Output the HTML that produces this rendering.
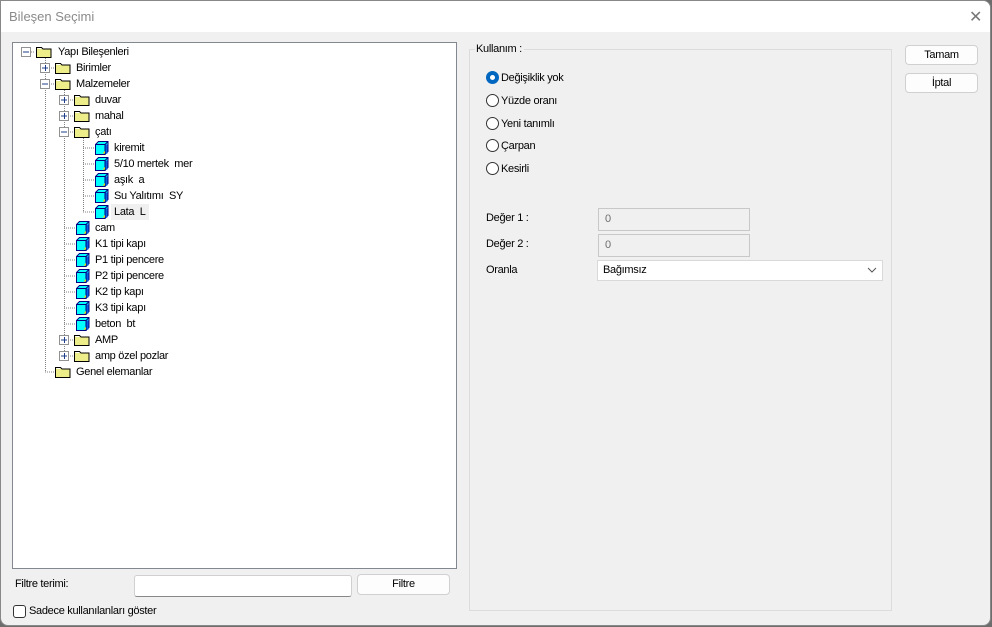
<!DOCTYPE html>
<html><head><meta charset="utf-8"><style>
*{margin:0;padding:0;box-sizing:border-box}
body{width:992px;height:627px;background:#6d6d6d;font-family:"Liberation Sans",sans-serif;font-size:11px;letter-spacing:-0.3px;color:#000;overflow:hidden;position:relative}
.win{position:absolute;left:0;top:0;width:991px;height:626px;background:#f0f0f0;border:1px solid #888;border-radius:0 8px 8px 8px;overflow:hidden}
.title{position:absolute;left:0;top:0;width:100%;height:31px;background:#fff}
.title span{position:absolute;left:8px;top:8px;font-size:13px;letter-spacing:0;color:#8a8a8a}
.x{position:absolute;left:968px;top:6px;font-size:16px;color:#777}
.a{position:absolute;white-space:nowrap}
.tree{position:absolute;left:11px;top:41px;width:445px;height:527px;background:#fff;border:1px solid #828790}
.row{position:absolute;height:16px;line-height:16px}
.btn{position:absolute;background:#fdfdfd;border:1px solid #d0d0d0;border-radius:4px;text-align:center}
.inp{position:absolute;background:#f0f0f0;border:1px solid #c8c8c8;color:#6d6d6d;padding-left:6px}
.rad{position:absolute;width:13px;height:13px;border:1px solid #333;border-radius:50%;background:#fff}
</style></head><body>
<div class="win">
<div class="title"><span>Bileşen Seçimi</span><div class="x">✕</div></div>

<div class="tree">
<svg width="445" height="527" style="position:absolute;left:0;top:0">
<defs>
<g id="f"><path d="M0.5 2.5h5l1.5 1.5h8v8.5h-14.5z" fill="#eded8a" stroke="#000"/><path d="M1.5 3.5h4" stroke="#fff"/></g>
<g id="c"><path d="M0.5 3.5l3-3h9.5v10l-3 3h-9.5z" fill="#00ffff" stroke="#000080"/><path d="M0.5 3.5h9.5v10M10 3.5l3-3" fill="none" stroke="#000080"/><rect x="10.5" y="3.5" width="2" height="9" fill="#0060e0"/><path d="M7.5 12.5l2.5-2.5v2.5z" fill="#ffcc00"/></g>
</defs>
<g stroke="#808080" stroke-dasharray="1,1" fill="none">
<path d="M32.5 9v320"/><path d="M51.5 41v272"/><path d="M70.5 89v80"/>
<path d="M14 9h8M32 25h10M32 41h10M51 57h10M51 73h10M51 89h10M70 105h12M70 121h12M70 137h12M70 153h12M70 169h12M51 185h12M51 201h12M51 217h12M51 233h12M51 249h12M51 265h12M51 281h12M51 297h10M51 313h10M32 329h10"/>
</g>
<g fill="#fff" stroke="#919191">
<rect x="8.5" y="4.5" width="9" height="9"/><rect x="27.5" y="20.5" width="9" height="9"/><rect x="27.5" y="36.5" width="9" height="9"/>
<rect x="46.5" y="52.5" width="9" height="9"/><rect x="46.5" y="68.5" width="9" height="9"/><rect x="46.5" y="84.5" width="9" height="9"/>
<rect x="46.5" y="292.5" width="9" height="9"/><rect x="46.5" y="308.5" width="9" height="9"/>
</g>
<g stroke="#1f3c88">
<path d="M10 9h6M29 41h6M48 89h6M29 25h6M48 57h6M48 73h6M48 297h6M48 313h6"/>
<path d="M32.5 22v6M51.5 54v6M51.5 70v6M51.5 294v6M51.5 310v6"/>
</g>
<use href="#f" x="23" y="2"/><use href="#f" x="42" y="18"/><use href="#f" x="42" y="34"/>
<use href="#f" x="61" y="50"/><use href="#f" x="61" y="66"/><use href="#f" x="61" y="82"/>
<use href="#c" x="82" y="98"/><use href="#c" x="82" y="114"/><use href="#c" x="82" y="130"/><use href="#c" x="82" y="146"/><use href="#c" x="82" y="162"/>
<use href="#c" x="63" y="178"/><use href="#c" x="63" y="194"/><use href="#c" x="63" y="210"/><use href="#c" x="63" y="226"/><use href="#c" x="63" y="242"/><use href="#c" x="63" y="258"/><use href="#c" x="63" y="274"/>
<use href="#f" x="61" y="290"/><use href="#f" x="61" y="306"/><use href="#f" x="42" y="322"/>
<rect x="98" y="161" width="38" height="16" fill="#f0f0f0"/>
</svg>
<div class="row" style="left:45px;top:1px">Yapı Bileşenleri</div>
<div class="row" style="left:63px;top:17px">Birimler</div>
<div class="row" style="left:63px;top:33px">Malzemeler</div>
<div class="row" style="left:82px;top:49px">duvar</div>
<div class="row" style="left:82px;top:65px">mahal</div>
<div class="row" style="left:82px;top:81px">çatı</div>
<div class="row" style="left:101px;top:97px">kiremit</div>
<div class="row" style="left:101px;top:113px">5/10 mertek&nbsp; mer</div>
<div class="row" style="left:101px;top:129px">aşık&nbsp; a</div>
<div class="row" style="left:101px;top:145px">Su Yalıtımı&nbsp; SY</div>
<div class="row" style="left:101px;top:161px">Lata&nbsp; L</div>
<div class="row" style="left:82px;top:177px">cam</div>
<div class="row" style="left:82px;top:193px">K1 tipi kapı</div>
<div class="row" style="left:82px;top:209px">P1 tipi pencere</div>
<div class="row" style="left:82px;top:225px">P2 tipi pencere</div>
<div class="row" style="left:82px;top:241px">K2 tip kapı</div>
<div class="row" style="left:82px;top:257px">K3 tipi kapı</div>
<div class="row" style="left:82px;top:273px">beton&nbsp; bt</div>
<div class="row" style="left:82px;top:289px">AMP</div>
<div class="row" style="left:82px;top:305px">amp özel pozlar</div>
<div class="row" style="left:63px;top:321px">Genel elemanlar</div>
</div>

<div class="a" style="left:14px;top:577px">Filtre terimi:</div>
<div class="a" style="left:133px;top:574px;width:218px;height:22px;background:#fff;border:1px solid #d0d0d0;border-bottom-color:#888;border-radius:3px"></div>
<div class="btn" style="left:356px;top:573px;width:93px;height:21px;line-height:19px">Filtre</div>
<div class="a" style="left:12px;top:604px;width:13px;height:13px;border:1px solid #333;border-radius:3px;background:#fff"></div>
<div class="a" style="left:28px;top:604px">Sadece kullanılanları göster</div>

<div class="a" style="left:468px;top:48px;width:423px;height:562px;border:1px solid #dcdcdc"></div>
<div class="a" style="left:474px;top:42px;background:#f0f0f0;padding:0 2px 0 1px">Kullanım :</div>
<div class="rad" style="left:485px;top:70px;border:4px solid #0067c0"></div>
<div class="a" style="left:500px;top:71px">Değişiklik yok</div>
<div class="rad" style="left:485px;top:93px"></div><div class="a" style="left:500px;top:94px">Yüzde oranı</div>
<div class="rad" style="left:485px;top:116px"></div><div class="a" style="left:500px;top:117px">Yeni tanımlı</div>
<div class="rad" style="left:485px;top:138px"></div><div class="a" style="left:500px;top:139px">Çarpan</div>
<div class="rad" style="left:485px;top:161px"></div><div class="a" style="left:500px;top:162px">Kesirli</div>
<div class="a" style="left:485px;top:211px">Değer 1 :</div>
<div class="inp" style="left:597px;top:207px;width:152px;height:23px;line-height:21px">0</div>
<div class="a" style="left:485px;top:237px">Değer 2 :</div>
<div class="inp" style="left:597px;top:233px;width:152px;height:23px;line-height:21px">0</div>
<div class="a" style="left:485px;top:263px">Oranla</div>
<div class="a" style="left:596px;top:259px;width:286px;height:21px;background:#fff;border:1px solid #d9d9d9;line-height:19px;padding-left:5px">Bağımsız<svg style="position:absolute;right:5px;top:6px" width="10" height="6"><path d="M1 1l4 4 4-4" stroke="#555" fill="none"/></svg></div>

<div class="btn" style="left:904px;top:44px;width:73px;height:20px;line-height:18px">Tamam</div>
<div class="btn" style="left:904px;top:72px;width:73px;height:20px;line-height:18px">İptal</div>
</div>
</body></html>
